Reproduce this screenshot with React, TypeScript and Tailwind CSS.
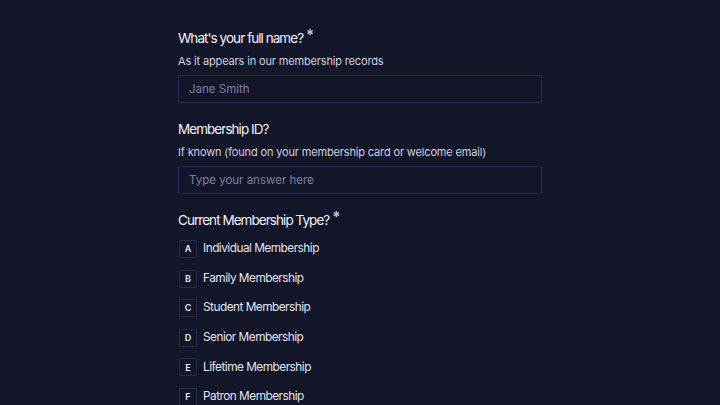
const options = [
  { key: "A", label: "Individual Membership" },
  { key: "B", label: "Family Membership" },
  { key: "C", label: "Student Membership" },
  { key: "D", label: "Senior Membership" },
  { key: "E", label: "Lifetime Membership" },
  { key: "F", label: "Patron Membership" },
];

function Question({ title, required }: { title: string; required?: boolean }) {
  return (
    <h2 className="flex items-start h-[20px] text-[13.5px] leading-[20px] text-[#f0f1fa] tracking-[-0.95px]">
      {title}
      {required && <span className="ml-[3px] text-[15px] leading-[14px] font-semibold text-[#c3c9f3]">*</span>}
    </h2>
  );
}

export default function App() {
  return (
    <div
      className="w-[720px] h-[405px] overflow-hidden bg-[#131629]"
      style={{ fontFamily: "Inter, 'Noto Sans', sans-serif" }}
    >
      <div className="w-[364px] ml-[178px] pt-[28px] flex flex-col">
        <Question title="What's your full name?" required />
        <p className="mt-[5px] h-[16px] text-[11px] leading-[16px] text-[#cdd0e0] tracking-[-0.15px]">
          As it appears in our membership records
        </p>
        <input
          className="mt-[6px] h-[28px] px-[10px] border border-[#282c5c] bg-transparent text-[11.5px] text-[#e0e2f0] placeholder:text-[#7b80a6] outline-none"
          placeholder="Jane Smith"
        />

        <div className="mt-[16px]">
          <Question title="Membership ID?" />
        </div>
        <p className="mt-[5px] h-[16px] text-[11px] leading-[16px] text-[#cdd0e0] tracking-[-0.15px]">
          If known (found on your membership card or welcome email)
        </p>
        <input
          className="mt-[6px] h-[28px] px-[10px] border border-[#282c5c] bg-transparent text-[11.5px] text-[#e0e2f0] placeholder:text-[#7b80a6] outline-none"
          placeholder="Type your answer here"
        />

        <div className="mt-[16px]">
          <Question title="Current Membership Type?" required />
        </div>
        <div className="mt-[10px] flex flex-col gap-[11.6px]">
          {options.map((o) => (
            <div key={o.key} className="flex items-center h-[18px]">
              <span className="w-[18px] h-[18px] ml-[1px] flex items-center justify-center border border-[#262a56] text-[9px] font-semibold text-[#e6e8f4]">
                {o.key}
              </span>
              <span className="ml-[6px] text-[11.8px] text-[#e2e4f0] tracking-[-0.5px]">{o.label}</span>
            </div>
          ))}
        </div>
      </div>
    </div>
  );
}
